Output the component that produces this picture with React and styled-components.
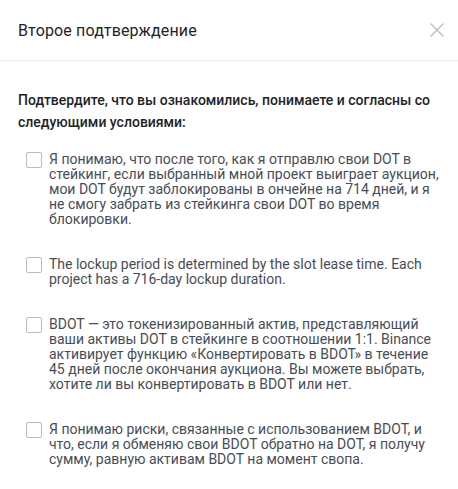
import styled, { createGlobalStyle } from "styled-components";

const GlobalStyle = createGlobalStyle`
  html, body {
    margin: 0;
    padding: 0;
    background: #ffffff;
  }
  body {
    font-family: Roboto, "Noto Sans", sans-serif;
    -webkit-font-smoothing: antialiased;
  }
`;

const Modal = styled.div`
  width: 458px;
  min-height: 489px;
  background: #ffffff;
  box-sizing: border-box;
`;

const Header = styled.div`
  height: 60px;
  display: flex;
  align-items: center;
  justify-content: space-between;
  padding: 0 9px 0 18px;
  border-bottom: 1px solid #eaecef;
`;

const Title = styled.h2`
  margin: 0;
  font-size: 16px;
  font-weight: 400;
  letter-spacing: 0.15px;
  color: #1e2329;
`;

const CloseButton = styled.button`
  width: 24px;
  height: 24px;
  padding: 0;
  border: none;
  background: transparent;
  display: flex;
  align-items: center;
  justify-content: center;
  cursor: pointer;
`;

const Body = styled.div`
  padding: 28px 18px 20px 18px;
`;

const Intro = styled.p`
  margin: 0 0 19px 0;
  font-size: 14px;
  line-height: 22px;
  font-weight: 500;
  color: #1e2329;
`;

const List = styled.div`
  display: flex;
  flex-direction: column;
  gap: 30px;
  padding-left: 8px;
`;

const Item = styled.label`
  display: flex;
  align-items: flex-start;
  gap: 7px;
  cursor: pointer;
`;

const Box = styled.span`
  flex: none;
  width: 16px;
  height: 16px;
  box-sizing: border-box;
  border: 1px solid #b7bdc6;
  border-radius: 2px;
`;

const ItemText = styled.span`
  font-size: 14px;
  line-height: 15px;
  color: #474d57;
`;

const terms = [
  "Я понимаю, что после того, как я отправлю свои DOT в стейкинг, если выбранный мной проект выиграет аукцион, мои DOT будут заблокированы в ончейне на 714 дней, и я не смогу забрать из стейкинга свои DOT во время блокировки.",
  "The lockup period is determined by the slot lease time. Each project has a 716-day lockup duration.",
  "BDOT — это токенизированный актив, представляющий ваши активы DOT в стейкинге в соотношении 1:1. Binance активирует функцию «Конвертировать в BDOT» в течение 45 дней после окончания аукциона. Вы можете выбрать, хотите ли вы конвертировать в BDOT или нет.",
  "Я понимаю риски, связанные с использованием BDOT, и что, если я обменяю свои BDOT обратно на DOT, я получу сумму, равную активам BDOT на момент свопа.",
];

export default function App() {
  return (
    <>
      <GlobalStyle />
      <Modal>
        <Header>
          <Title>Второе подтверждение</Title>
          <CloseButton aria-label="close">
            <svg width="16" height="16" viewBox="0 0 16 16">
              <path d="M1.5 1.5 L14.5 14.5 M14.5 1.5 L1.5 14.5" stroke="#b7bdc6" strokeWidth="1.4" fill="none" />
            </svg>
          </CloseButton>
        </Header>
        <Body>
          <Intro>
            Подтвердите, что вы ознакомились, понимаете и согласны со следующими условиями:
          </Intro>
          <List>
            {terms.map((t, i) => (
              <Item key={i}>
                <Box />
                <ItemText>{t}</ItemText>
              </Item>
            ))}
          </List>
        </Body>
      </Modal>
    </>
  );
}
